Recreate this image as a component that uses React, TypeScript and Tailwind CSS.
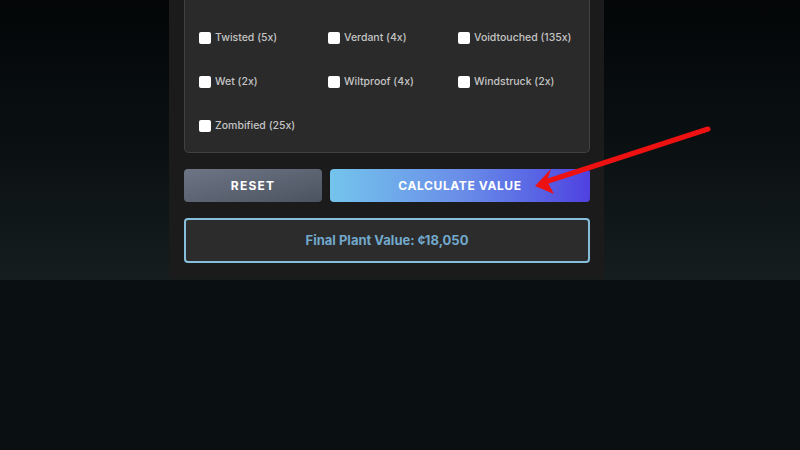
import React from "react";

const mutations = [
    "Twisted (5x)", "Verdant (4x)", "Voidtouched (135x)",
    "Wet (2x)", "Wiltproof (4x)", "Windstruck (2x)",
    "Zombified (25x)",
];

function App() {
    return (
        <div className="relative w-[800px] h-[450px] overflow-hidden bg-[#0a0f12]" style={{ fontFamily: "Inter, 'Liberation Sans', sans-serif" }}>
            {/* top section */}
            <div className="h-[280px] bg-gradient-to-b from-[#040607] via-[#0a1012] to-[#151d1f]">
                <div className="ml-[169px] w-[435px] h-[279px] bg-[#1c1b1b] pl-[15px] pr-[14px] pb-[16px] flex flex-col">
                    <div className="h-[153px] bg-[#2a2a2a] border border-t-0 border-[#414141] rounded-b-[5px] pt-[28px] pl-[14px]">
                        <div className="grid grid-cols-[129px_130px_1fr] gap-y-[24px]">
                            {mutations.map((m) => (
                                <label key={m} className="flex items-center h-[20px] gap-[4px] text-[10.5px] font-medium text-[#c4c4c4]">
                                    <span className="w-[12px] h-[12px] bg-white rounded-[2px]" />
                                    {m}
                                </label>
                            ))}
                        </div>
                    </div>

                    <div className="flex gap-[8px] mt-[16px] h-[33px]">
                        <button className="w-[138px] rounded-[4px] bg-gradient-to-br from-[#6e7585] to-[#4c5360] text-white text-[12px] font-bold tracking-[1.2px]">
                            RESET
                        </button>
                        <button className="flex-1 rounded-[4px] bg-gradient-to-r from-[#74c4ec] via-[#6a8ee8] to-[#5040e0] text-white text-[12px] font-bold tracking-[0.6px]">
                            CALCULATE VALUE
                        </button>
                    </div>

                    <div className="mt-[16px] h-[45px] rounded-[4px] border-2 border-[#86bfdc] bg-[#2d2c2c] flex items-center justify-center">
                        <span className="text-[13px] font-bold text-[#72a9cc]">Final Plant Value: ¢18,050</span>
                    </div>
                </div>
            </div>

            {/* red arrow annotation */}
            <svg className="absolute left-0 top-0 pointer-events-none" width="800" height="450">
                <line x1="708" y1="129" x2="545" y2="182" stroke="#ee1111" strokeWidth="5" strokeLinecap="round" />
                <polygon points="535,186 551,169 547,181 554,194" fill="#ee1111" />
            </svg>
        </div>
    );
}

export default App;
